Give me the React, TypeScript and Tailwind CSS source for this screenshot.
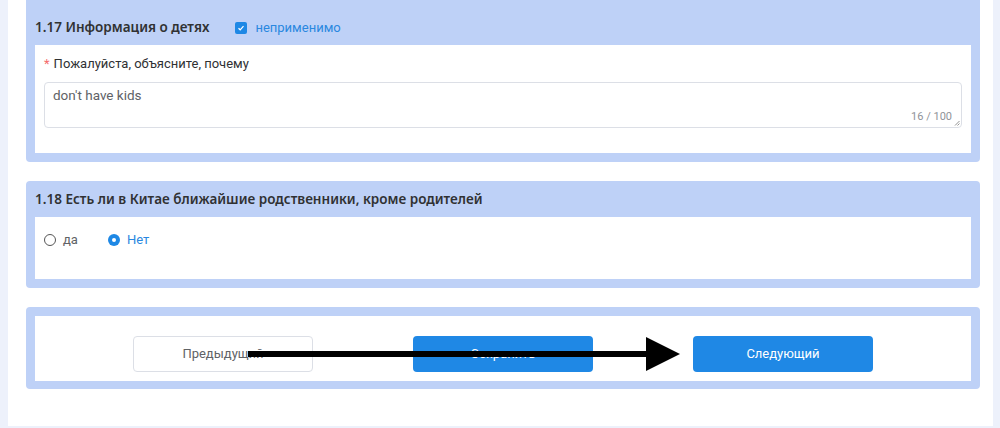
import React from "react";

export default function App() {
  const font = { fontFamily: 'Roboto, "Noto Sans", sans-serif' };
  const head = { fontFamily: '"Noto Sans", Roboto, sans-serif' };
  return (
    <div className="relative w-[1000px] h-[428px] overflow-hidden bg-[#edf1fb] pl-[8px] pr-[7px] pb-[2px]" style={font}>
      <div className="h-full bg-white pl-[18px] pr-[13px] flex flex-col gap-[19px]">
        {/* Card 1.17 */}
        <div className="bg-[#bed1f7] rounded-b-[4px] px-[9px] pb-[9px]">
          <div className="h-[45px] flex items-center pt-[10px] gap-[26px]">
            <span className="text-[13.5px] font-semibold text-[#303133]" style={head}>1.17 Информация о детях</span>
            <label className="flex items-center gap-[8px]">
              <span className="w-[12px] h-[12px] rounded-[2px] bg-[#1e88e5] flex items-center justify-center">
                <svg width="8" height="8" viewBox="0 0 8 8"><path d="M1.5 4.2 L3.2 5.8 L6.5 2.2" fill="none" stroke="white" strokeWidth="1.2" /></svg>
              </span>
              <span className="text-[13px] text-[#2a88e0]">неприменимо</span>
            </label>
          </div>
          <div className="bg-white h-[108px] px-[9px] pt-[9px]">
            <div className="text-[13px] text-[#303133] h-[20px] flex items-center">
              <span className="text-[#f56c6c] mr-[4px]">*</span>Пожалуйста, объясните, почему
            </div>
            <div className="relative mt-[8px] h-[46px] border border-[#dcdfe6] rounded-[4px] px-[8px] pt-[2px]">
              <div className="text-[13.5px] text-[#606266]">don't have kids</div>
              <span className="absolute right-[9px] bottom-[2px] text-[11px] text-[#909399]">16 / 100</span>
              <svg className="absolute right-[1px] bottom-[1px]" width="6" height="6" viewBox="0 0 6 6">
                <path d="M1 5.5 L5.5 1 M3.5 5.5 L5.5 3.5" stroke="#777" strokeWidth="0.8" />
              </svg>
            </div>
          </div>
        </div>

        {/* Card 1.18 */}
        <div className="bg-[#bed1f7] rounded-[4px] px-[9px] pb-[9px]">
          <div className="h-[36px] flex items-center">
            <span className="text-[13.5px] font-semibold text-[#303133]" style={head}>1.18 Есть ли в Китае ближайшие родственники, кроме родителей</span>
          </div>
          <div className="bg-white h-[62px] px-[9px] pt-[15px]">
            <div className="flex items-center h-[16px]">
              <label className="flex items-center gap-[7px]">
                <span className="w-[12px] h-[12px] rounded-full border border-[#555] bg-white"></span>
                <span className="text-[13px] text-[#606266]">да</span>
              </label>
              <label className="flex items-center gap-[7px] ml-[30px]">
                <span className="w-[12px] h-[12px] rounded-full bg-[#1e88e5] flex items-center justify-center">
                  <span className="w-[4px] h-[4px] rounded-full bg-white"></span>
                </span>
                <span className="text-[13px] text-[#2a88e0]">Нет</span>
              </label>
            </div>
          </div>
        </div>

        {/* Buttons card */}
        <div className="bg-[#bed1f7] rounded-[4px] p-[9px] pb-[8px]">
          <div className="bg-white h-[65px] flex items-start justify-center gap-[100px] pt-[20px]">
            <button className="w-[180px] h-[36px] rounded-[4px] border border-[#dcdfe6] bg-white text-[13px] text-[#606266]">Предыдущий</button>
            <button className="w-[180px] h-[36px] rounded-[4px] bg-[#1f88e5] text-[13px] text-white">Сохранить</button>
            <button className="w-[180px] h-[36px] rounded-[4px] bg-[#1f88e5] text-[13px] text-white">Следующий</button>
          </div>
        </div>
      </div>

      {/* annotation arrow */}
      <svg className="absolute left-0 top-0 pointer-events-none" width="1000" height="428" viewBox="0 0 1000 428">
        <rect x="248" y="351" width="400" height="6" fill="#000" />
        <polygon points="646,337 680,354 646,371" fill="#000" />
      </svg>
    </div>
  );
}
